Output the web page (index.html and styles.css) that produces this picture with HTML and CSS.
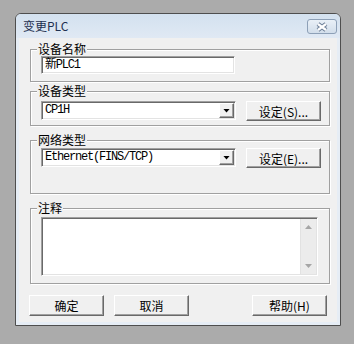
FILE: index.html
```html
<!DOCTYPE html>
<html lang="zh-CN">
<head>
    <meta charset="UTF-8">
    <title>变更PLC</title>
    <link rel="stylesheet" href="styles.css">
</head>
<body>
    <div class="window">
        <div class="titlebar">
            <span class="title">变更PLC</span>
            <button class="close" aria-label="关闭">
                <svg width="14" height="10" viewBox="0 0 14 10">
                    <path d="M3 2 L11 8 M11 2 L3 8" stroke="#6f8199" stroke-width="4.5"/>
                    <path d="M3 2 L11 8 M11 2 L3 8" stroke="#fff" stroke-width="2.2"/>
                </svg>
            </button>
        </div>
        <div class="client">
            <fieldset class="group group-name">
                <legend>设备名称</legend>
                <div class="field text-field">新PLC1</div>
            </fieldset>

            <fieldset class="group group-type">
                <legend>设备类型</legend>
                <div class="row">
                    <div class="field combo">
                        <span class="combo-text">CP1H</span>
                        <span class="drop"><i class="tri"></i></span>
                    </div>
                    <button class="btn">设定(S)...</button>
                </div>
            </fieldset>

            <fieldset class="group group-net">
                <legend>网络类型</legend>
                <div class="row">
                    <div class="field combo">
                        <span class="combo-text">Ethernet(FINS/TCP)</span>
                        <span class="drop"><i class="tri"></i></span>
                    </div>
                    <button class="btn">设定(E)...</button>
                </div>
            </fieldset>

            <fieldset class="group group-note">
                <legend>注释</legend>
                <div class="field memo">
                    <div class="scrollbar">
                        <span class="arrow"><i class="tri tri-up"></i></span>
                        <span class="arrow"><i class="tri tri-down"></i></span>
                    </div>
                </div>
            </fieldset>

            <div class="actions">
                <button class="btn">确定</button>
                <button class="btn">取消</button>
                <button class="btn help">帮助(H)</button>
            </div>
        </div>
    </div>
</body>
</html>
```

FILE: styles.css
```css
* {
    box-sizing: border-box;
}

body {
    margin: 0;
    background-color: #ababab;
    font-family: "Noto Sans CJK SC", sans-serif;
    font-size: 12px;
    color: #000;
}

.window {
    margin: 13px 0 0 15px;
    width: 326px;
    height: 313px;
    border: 1px solid #4e4e4e;
    border-radius: 6px 6px 0 0;
    background-color: #e6edf5;
    display: flex;
    flex-direction: column;
}

.titlebar {
    height: 24px;
    display: flex;
    align-items: flex-start;
    padding-left: 7px;
    border-radius: 5px 5px 0 0;
    background: linear-gradient(#d3e1ef, #e0e9f4);
}

.title {
    line-height: 24px;
    color: #1e3050;
}

.close {
    margin: 5px 3px 0 auto;
    width: 30px;
    height: 15px;
    padding: 0;
    border: 1px solid #8da0b7;
    border-radius: 3px;
    background: linear-gradient(#e9f0f7, #d2deeb);
    display: flex;
    align-items: center;
    justify-content: center;
}

.close svg {
    display: block;
}

.client {
    flex: 1;
    margin: 0 3px 3px;
    padding: 4px 10px 0;
    background-color: #f0f0f0;
}

/* group boxes */
.group {
    margin: 0 0 0 1px;
    width: 300px;
    min-width: 0;
    padding: 0 0 7px 10px;
    border: 1px solid #a0a0a0;
    box-shadow: inset 1px 1px #fff, 1px 1px #fff;
}

.group legend {
    margin-left: -4px;
    padding: 0 1px;
    line-height: 14px;
    background-color: #f0f0f0;
}

.group-type {
    margin-top: 2px;
    padding-bottom: 4px;
}

.group-net {
    margin-top: 7px;
    padding-bottom: 25px;
}

.group-note {
    margin-top: 7px;
}

.group-type .row {
    margin-top: 3px;
}

.group-net .row {
    margin-top: 1px;
}

.row {
    display: flex;
    align-items: flex-start;
    gap: 10px;
}

/* sunken fields */
.field {
    background-color: #fff;
    border: 1px solid;
    border-color: #a0a0a0 #fff #fff #a0a0a0;
    box-shadow: inset 1px 1px #696969, inset -1px -1px #e3e3e3;
}

.text-field,
.combo-text {
    font-family: "Liberation Mono", "Noto Sans CJK SC", monospace;
    letter-spacing: -1.2px;
    white-space: nowrap;
}

.text-field {
    width: 194px;
    height: 18px;
    padding: 0 3px;
    line-height: 16px;
}

.combo {
    width: 195px;
    height: 19px;
    padding: 1px;
    display: flex;
    align-items: center;
}

.combo-text {
    padding-left: 2px;
    line-height: 15px;
}

.drop {
    margin-left: auto;
    width: 15px;
    height: 15px;
    background-color: #f0f0f0;
    border: 1px solid;
    border-color: #fff #696969 #696969 #fff;
    box-shadow: inset -1px -1px #a0a0a0;
    display: flex;
    align-items: center;
    justify-content: center;
}

.tri {
    display: block;
    width: 7px;
    height: 4px;
    background-color: #000;
    clip-path: polygon(0 0, 100% 0, 50% 100%);
}

.memo {
    margin-top: 2px;
    width: 277px;
    height: 59px;
    padding: 1px;
    display: flex;
    justify-content: flex-end;
}

.scrollbar {
    width: 16px;
    background-color: #ececec;
    border-left: 1px solid #e2e2e2;
    display: flex;
    flex-direction: column;
    justify-content: space-between;
}

.arrow {
    height: 16px;
    display: flex;
    align-items: center;
    justify-content: center;
}

.tri-up,
.tri-down {
    background-color: #a6a6a6;
}

.tri-up {
    clip-path: polygon(50% 0, 100% 100%, 0 100%);
}

/* push buttons */
.btn {
    height: 21px;
    padding: 0;
    font: inherit;
    color: #000;
    background-color: #f0f0f0;
    border: 1px solid;
    border-color: #fff #696969 #696969 #fff;
    box-shadow: inset -1px -1px #a0a0a0;
    white-space: nowrap;
}

.row .btn {
    width: 75px;
    height: 20px;
}

.actions {
    margin-top: 11px;
    display: flex;
    gap: 10px;
}

.actions .btn {
    width: 75px;
}

.actions .help {
    margin-left: auto;
}
```
